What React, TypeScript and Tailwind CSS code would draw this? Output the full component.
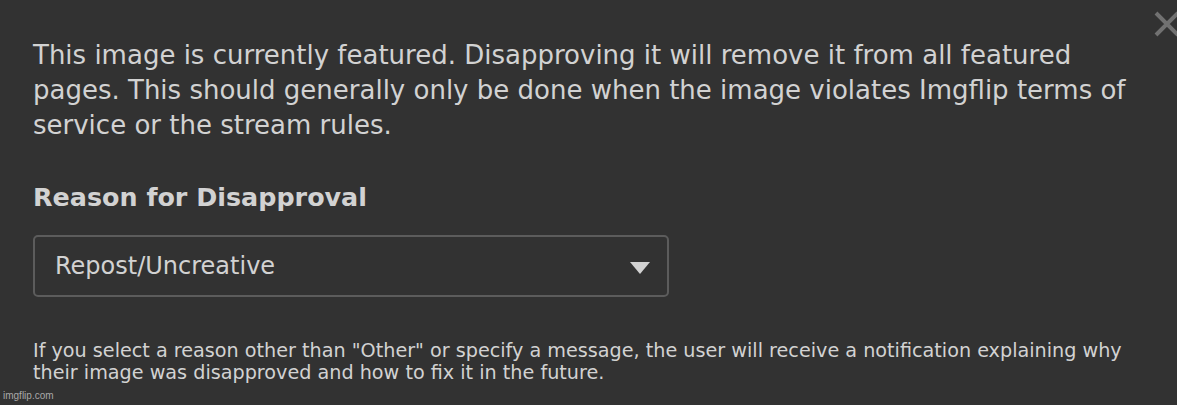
import { useState } from 'react'

const reasons = ['Repost/Uncreative', 'Spam', 'Offensive', 'Low quality', 'Other']

export default function App() {
  const [reason, setReason] = useState(reasons[0])

  return (
    <div className="relative h-[405px] w-[1177px] overflow-hidden bg-[#323232] font-['DejaVu_Sans','Liberation_Sans',sans-serif] text-[#d2d2d2]">
      {/* close button */}
      <button className="absolute right-[-4px] top-[10px] h-[28px] w-[28px] text-[#717171]" aria-label="Close">
        <svg viewBox="0 0 28 28" className="h-full w-full" fill="none" stroke="currentColor" strokeWidth="4">
          <path d="M3 3 L25 25 M25 3 L3 25" />
        </svg>
      </button>

      <div className="px-[33px] pt-[38px]">
        <p className="w-[1110px] text-[26px] leading-[35px]">
          This image is currently featured. Disapproving it will remove it from all featured pages. This should
          generally only be done when the image violates Imgflip terms of service or the stream rules.
        </p>

        <h3 className="mt-[39px] text-[25.4px] font-bold leading-[30px]">Reason for Disapproval</h3>

        <div className="relative mt-[23px] w-[636px]">
          <select
            value={reason}
            onChange={e => setReason(e.target.value)}
            className="h-[62px] w-full appearance-none rounded-[5px] border-2 border-[#5c5c5c] bg-[#323232] pl-[20px] text-[24px] text-[#d2d2d2] outline-none"
          >
            {reasons.map(r => (
              <option key={r}>{r}</option>
            ))}
          </select>
          <svg className="pointer-events-none absolute right-[19px] top-[27px] h-[12px] w-[20px]" viewBox="0 0 20 12">
            <path d="M0 0 H20 L10 12 Z" fill="#d2d2d2" />
          </svg>
        </div>

        <p className="mt-[43px] w-[1110px] text-[19.2px] leading-[22px]">
          If you select a reason other than "Other" or specify a message, the user will receive a notification explaining
          why their image was disapproved and how to fix it in the future.
        </p>
      </div>

      <div className="absolute bottom-[3px] left-[3px] font-['Liberation_Sans',Arial,sans-serif] text-[10px] leading-[12px] text-[#a8a8a8]">
        imgflip.com
      </div>
    </div>
  )
}
